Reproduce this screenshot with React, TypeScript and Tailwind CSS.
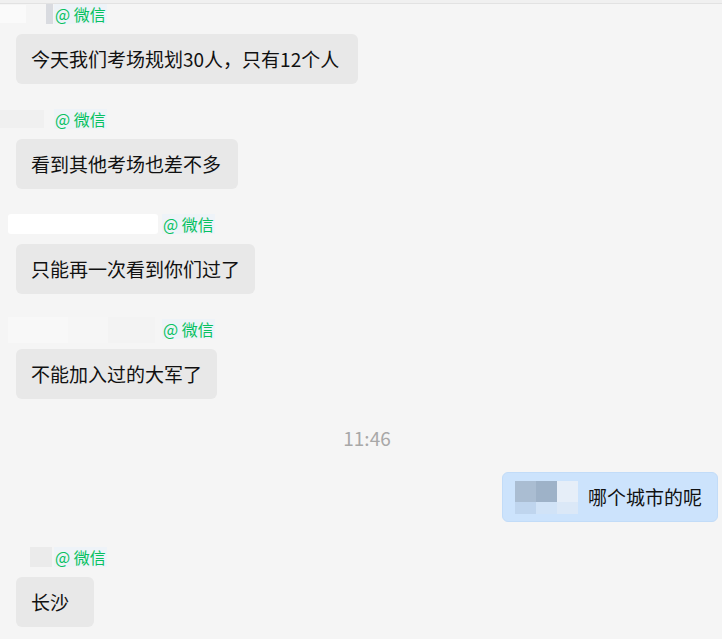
import React from 'react';

const font = { fontFamily: '"Microsoft YaHei", "Noto Sans CJK SC", "Noto Sans", sans-serif' };

function Tag() {
  return (
    <span className="flex items-center h-[20px] px-[1px] bg-[#eef3f8] text-[16px] leading-none text-[#07c160]">
      @ 微信
    </span>
  );
}

function NameRow({ children }: { children: React.ReactNode }) {
  return <div className="flex items-center h-[20px]">{children}<Tag /></div>;
}

function Bubble({ text, className = '' }: { text: string; className?: string }) {
  return (
    <div className={`ml-[16px] mt-[10px] self-start h-[50px] flex items-center px-[15px] rounded-[6px] bg-[#e8e8e8] text-[19px] text-[#111] ${className}`}>
      {text}
    </div>
  );
}

export default function App() {
  return (
    <div className="w-[722px] h-[639px] overflow-hidden bg-[#f5f5f5]" style={font}>
      <div className="h-[3px] bg-[#f0f0f0]" />
      <div className="border-t border-[#e2e2e2]" />
      <div className="flex flex-col">
        <NameRow>
          <span className="w-[26px] h-[18px] bg-[#fafafa]" />
          <span className="w-[20px]" />
          <span className="w-[7px] h-[20px] bg-[#d9dbe0] mr-[1px]" />
        </NameRow>
        <Bubble text="今天我们考场规划30人，只有12个人" className="pr-[19px]" />

        <div className="mt-[25px]">
          <NameRow>
            <span className="w-[44px] h-[18px] bg-[#f0f0f0] mr-[10px]" />
          </NameRow>
        </div>
        <Bubble text="看到其他考场也差不多" className="pr-[17px]" />

        <div className="mt-[25px]">
          <NameRow>
            <span className="ml-[8px] w-[150px] h-[20px] bg-white rounded-[3px] mr-[4px]" />
          </NameRow>
        </div>
        <Bubble text="只能再一次看到你们过了" />

        <div className="mt-[25px]">
          <NameRow>
            <span className="ml-[8px] flex h-[26px] mr-[7px] self-start -mt-[2px]">
              <span className="w-[60px] bg-[#f8f8f8]" />
              <span className="w-[40px] bg-[#f6f6f6]" />
              <span className="w-[47px] bg-[#f3f3f3]" />
            </span>
          </NameRow>
        </div>
        <Bubble text="不能加入过的大军了" />

        <div className="mt-[27px] h-[24px] flex items-center justify-center pl-[12px] text-[19px] text-[#a8a8a8]">
          11:46
        </div>

        <div className="mt-[22px] self-end mr-[4px] h-[50px] w-[216px] flex items-center pl-[12px] rounded-[6px] bg-[#cce3fc] border border-[#c2dcf8] text-[19px] text-[#111]">
          <div className="grid grid-cols-[21px_21px_21px] grid-rows-[21px_12px] mr-[10px]">
            <span className="bg-[#aabdd2]" />
            <span className="bg-[#9eb2c8]" />
            <span className="bg-[#e6eef8]" />
            <span className="bg-[#bfd5ee]" />
            <span className="bg-[#d1e3f7]" />
            <span className="bg-[#dbe8f7]" />
          </div>
          哪个城市的呢
        </div>

        <div className="mt-[25px]">
          <NameRow>
            <span className="ml-[30px] w-[22px] h-[20px] bg-[#ebebeb] mr-[2px]" />
          </NameRow>
        </div>
        <Bubble text="长沙" className="w-[78px]" />
      </div>
    </div>
  );
}
